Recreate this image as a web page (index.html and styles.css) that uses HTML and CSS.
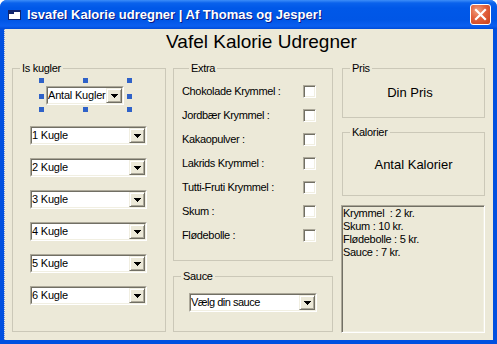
FILE: index.html
```html
<!DOCTYPE html>
<html lang="da">
<head>
<meta charset="utf-8">
<title>Isvafel Kalorie udregner</title>
<link rel="stylesheet" href="styles.css">
</head>
<body>
<div class="window">
  <div class="titlebar">
    <svg class="app-icon" width="14" height="12" viewBox="0 0 14 12">
      <rect x="0.5" y="1.5" width="12" height="9" fill="#fff" stroke="#10246e"/>
      <rect x="1" y="2" width="5" height="3" fill="#10246e"/>
      <rect x="6" y="2" width="6" height="1" fill="#10246e"/>
    </svg>
    <span class="title">Isvafel Kalorie udregner | Af Thomas og Jesper!</span>
    <div class="close">
      <svg width="19" height="19" viewBox="0 0 19 19"><path d="M5 5 L14 14 M14 5 L5 14" stroke="#fff" stroke-width="2.2" stroke-linecap="square"/></svg>
    </div>
  </div>
  <div class="client">
    <h1 class="heading">Vafel Kalorie Udregner</h1>
    <div class="columns">
      <fieldset class="frame frame-kugler">
        <legend>Is kugler</legend>
        <div class="selected">
          <div class="combo combo-antal"><div class="combo-inner"><span class="combo-text">Antal Kugler</span><span class="combo-btn"><svg width="7" height="4" viewBox="0 0 7 4"><path d="M0 0h7v1H0zM1 1h5v1H1zM2 2h3v1H2zM3 3h1v1H3z"/></svg></span></div></div>
          <span class="handle h-tl"></span><span class="handle h-tc"></span><span class="handle h-tr"></span>
          <span class="handle h-ml"></span><span class="handle h-mr"></span>
          <span class="handle h-bl"></span><span class="handle h-bc"></span><span class="handle h-br"></span>
        </div>
        <div class="kugle-list">
          <div class="combo combo-kugle"><div class="combo-inner"><span class="combo-text">1 Kugle</span><span class="combo-btn"><svg width="7" height="4" viewBox="0 0 7 4"><path d="M0 0h7v1H0zM1 1h5v1H1zM2 2h3v1H2zM3 3h1v1H3z"/></svg></span></div></div>
          <div class="combo combo-kugle"><div class="combo-inner"><span class="combo-text">2 Kugle</span><span class="combo-btn"><svg width="7" height="4" viewBox="0 0 7 4"><path d="M0 0h7v1H0zM1 1h5v1H1zM2 2h3v1H2zM3 3h1v1H3z"/></svg></span></div></div>
          <div class="combo combo-kugle"><div class="combo-inner"><span class="combo-text">3 Kugle</span><span class="combo-btn"><svg width="7" height="4" viewBox="0 0 7 4"><path d="M0 0h7v1H0zM1 1h5v1H1zM2 2h3v1H2zM3 3h1v1H3z"/></svg></span></div></div>
          <div class="combo combo-kugle"><div class="combo-inner"><span class="combo-text">4 Kugle</span><span class="combo-btn"><svg width="7" height="4" viewBox="0 0 7 4"><path d="M0 0h7v1H0zM1 1h5v1H1zM2 2h3v1H2zM3 3h1v1H3z"/></svg></span></div></div>
          <div class="combo combo-kugle"><div class="combo-inner"><span class="combo-text">5 Kugle</span><span class="combo-btn"><svg width="7" height="4" viewBox="0 0 7 4"><path d="M0 0h7v1H0zM1 1h5v1H1zM2 2h3v1H2zM3 3h1v1H3z"/></svg></span></div></div>
          <div class="combo combo-kugle"><div class="combo-inner"><span class="combo-text">6 Kugle</span><span class="combo-btn"><svg width="7" height="4" viewBox="0 0 7 4"><path d="M0 0h7v1H0zM1 1h5v1H1zM2 2h3v1H2zM3 3h1v1H3z"/></svg></span></div></div>
        </div>
      </fieldset>
      <div class="col-mid">
        <fieldset class="frame frame-extra">
          <legend>Extra</legend>
          <div class="row"><span class="lbl">Chokolade Krymmel :</span><span class="check"></span></div>
          <div class="row"><span class="lbl">Jordbær Krymmel :</span><span class="check"></span></div>
          <div class="row"><span class="lbl">Kakaopulver :</span><span class="check"></span></div>
          <div class="row"><span class="lbl">Lakrids Krymmel :</span><span class="check"></span></div>
          <div class="row"><span class="lbl">Tutti-Fruti Krymmel :</span><span class="check"></span></div>
          <div class="row"><span class="lbl">Skum :</span><span class="check"></span></div>
          <div class="row"><span class="lbl">Flødebolle :</span><span class="check"></span></div>
        </fieldset>
        <fieldset class="frame frame-sauce">
          <legend>Sauce</legend>
          <div class="combo combo-sauce"><div class="combo-inner"><span class="combo-text">Vælg din sauce</span><span class="combo-btn"><svg width="7" height="4" viewBox="0 0 7 4"><path d="M0 0h7v1H0zM1 1h5v1H1zM2 2h3v1H2zM3 3h1v1H3z"/></svg></span></div></div>
        </fieldset>
      </div>
      <div class="col-right">
        <fieldset class="frame frame-pris">
          <legend>Pris</legend>
          <div class="big big-pris">Din Pris</div>
        </fieldset>
        <fieldset class="frame frame-kal">
          <legend>Kalorier</legend>
          <div class="big big-kal">Antal Kalorier</div>
        </fieldset>
        <div class="textbox">
          <div>Krymmel&nbsp; : 2 kr.</div>
          <div>Skum : 10 kr.</div>
          <div>Flødebolle : 5 kr.</div>
          <div>Sauce : 7 kr.</div>
        </div>
      </div>
    </div>
  </div>
</div>
</body>
</html>
```

FILE: styles.css
```css
* { box-sizing: border-box; }

body {
  margin: 0;
  background: #ffffff;
  font-family: "Liberation Sans", Arial, sans-serif;
  color: #000;
}

.window {
  width: 497px;
  height: 344px;
  background: #0050e0;
  border-radius: 7px 7px 0 0;
  display: flex;
  flex-direction: column;
  overflow: hidden;
}

.titlebar {
  height: 29px;
  flex-shrink: 0;
  display: flex;
  align-items: center;
  padding-left: 8px;
  background: linear-gradient(to bottom, #3d8ef8 0px, #0a62ec 3px, #0058e8 8px, #0056e6 20px, #0a5ff0 26px, #004bd8 29px);
}

.app-icon {
  margin-right: 5px;
  flex-shrink: 0;
}

.title {
  color: #fff;
  font-weight: bold;
  font-size: 13px;
  line-height: 16px;
  text-shadow: 1px 1px 0 #0a1883;
  white-space: nowrap;
}

.close {
  margin-left: auto;
  margin-right: 6px;
  width: 21px;
  height: 21px;
  border: 1px solid #fff;
  border-radius: 3px;
  background: radial-gradient(circle at 35% 30%, #f0a080 0%, #e2603c 45%, #c8401a 100%);
  display: flex;
  align-items: center;
  justify-content: center;
}

.client {
  flex: 1;
  margin: 0 4px 4px 4px;
  background: #ece9d8;
  border-left: 1px dotted #6b8fe0;
}

.heading {
  margin: 0;
  padding: 2px 0 0 25px;
  font-weight: normal;
  font-size: 19px;
  line-height: 22px;
  text-align: center;
}

.columns {
  display: flex;
  margin-top: 9px;
  padding-left: 7px;
}

.frame {
  margin: 0;
  padding: 0;
  min-width: 0;
  border: 1px solid #cbc8b8;
}

.frame legend {
  margin-left: 7px;
  padding: 0 2px;
  font-size: 11px;
  line-height: 13px;
  letter-spacing: -0.3px;
}

/* Is kugler */
.frame-kugler {
  width: 154px;
  height: 270px;
}

.selected {
  position: relative;
  width: 78px;
  height: 19px;
  margin: 11px 0 0 33px;
}

.handle {
  position: absolute;
  width: 5px;
  height: 5px;
  background: #2f62c8;
}
.h-tl { left: -7px; top: -8px; }
.h-tc { left: 37px; top: -8px; }
.h-tr { left: 81px; top: -8px; }
.h-ml { left: -7px; top: 8px; }
.h-mr { left: 81px; top: 8px; }
.h-bl { left: -7px; top: 21px; }
.h-bc { left: 37px; top: 21px; }
.h-br { left: 81px; top: 21px; }

.kugle-list {
  margin-top: 21px;
  padding-left: 17px;
  display: flex;
  flex-direction: column;
  gap: 13px;
}

/* combo box */
.combo {
  height: 19px;
  border: 1px solid;
  border-color: #aca899 #ffffff #ffffff #aca899;
  background: #fff;
}
.combo-inner {
  height: 100%;
  display: flex;
  border: 1px solid;
  border-color: #716f64 #f1efe2 #f1efe2 #716f64;
}
.combo-text {
  flex: 1;
  padding-left: 0;
  font-size: 11px;
  line-height: 15px;
  letter-spacing: -0.2px;
  white-space: nowrap;
  overflow: hidden;
}
.combo-btn {
  width: 16px;
  height: 15px;
  flex-shrink: 0;
  background: #ece9d8;
  border: 1px solid;
  border-color: #f1efe2 #716f64 #716f64 #f1efe2;
  box-shadow: inset 1px 1px 0 #fff, inset -1px -1px 0 #aca899;
  display: flex;
  align-items: center;
  justify-content: center;
}
.combo-btn svg { fill: #000; }

.combo-antal { width: 78px; }
.combo-kugle { width: 117px; }
.combo-sauce { width: 128px; margin: 10px 0 0 15px; }
.combo-sauce .combo-text { letter-spacing: -0.5px; }

/* middle column */
.col-mid {
  width: 160px;
  margin-left: 7px;
  display: flex;
  flex-direction: column;
}

.frame-extra {
  height: 199px;
  padding: 4px 16px 0 8px;
}

.row {
  height: 24px;
  display: flex;
  align-items: center;
  justify-content: space-between;
}

.lbl {
  font-size: 11px;
  letter-spacing: -0.35px;
  white-space: nowrap;
}

.check {
  width: 13px;
  height: 13px;
  background: #fff;
  border: 1px solid;
  border-color: #aca899 #ffffff #ffffff #aca899;
  box-shadow: inset 1px 1px 0 #716f64, inset -1px -1px 0 #f1efe2;
}

.frame-sauce {
  height: 62px;
  margin-top: 9px;
}

/* right column */
.col-right {
  width: 143px;
  margin-left: 9px;
  display: flex;
  flex-direction: column;
}

.frame-pris { height: 56px; }
.frame-kal { height: 70px; margin-top: 8px; }

.big {
  font-size: 13px;
  line-height: 16px;
  text-align: center;
}
.big-pris { margin-top: 10px; padding-right: 7px; }
.big-kal { margin-top: 18px; }

.textbox {
  margin: 9px 0 0 -1px;
  width: 144px;
  height: 128px;
  border: 1px solid;
  border-color: #aca899 #ffffff #ffffff #aca899;
  box-shadow: inset 1px 1px 0 #716f64, inset -1px -1px 0 #f1efe2;
  padding: 1px 0 0 1px;
  font-size: 11px;
  line-height: 13px;
  letter-spacing: -0.3px;
  background: #ece9d8;
}
```
